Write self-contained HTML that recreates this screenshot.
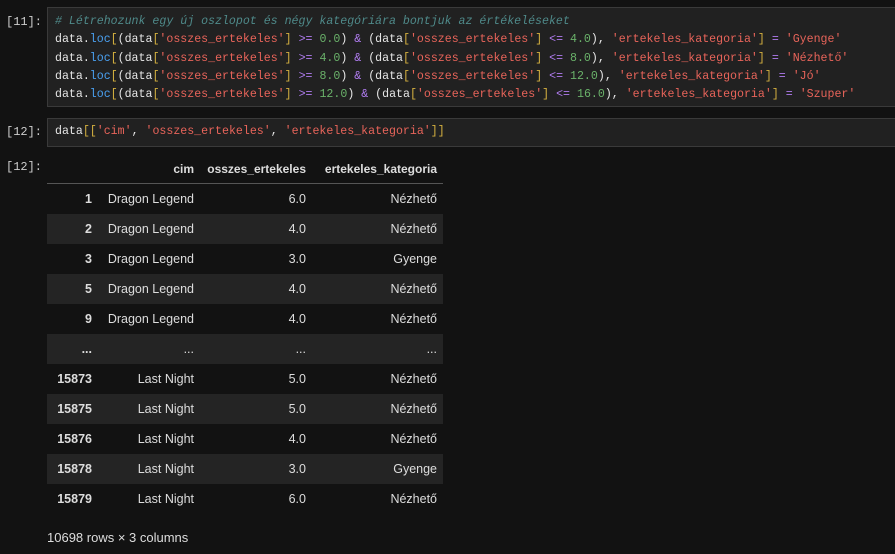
<!DOCTYPE html>
<html><head><meta charset="utf-8"><style>
body{margin:0;width:895px;height:554px;background:#121212;overflow:hidden;position:relative;font-family:"Liberation Sans",sans-serif;}
.p{position:absolute;left:6px;font-family:"Liberation Mono",monospace;font-size:12px;color:#ccc;}
.cell{position:absolute;left:47px;width:860px;background:#212121;border:1px solid #3a3a3a;box-sizing:border-box;}
pre{margin:0;font-family:"Liberation Mono",monospace;font-size:11.6px;line-height:18.3px;color:#e6e6e6;position:absolute;left:7px;white-space:pre;}
.c{color:#4f8a8a;font-style:italic}.s{color:#e8645a}.n{color:#6ab26a}.o{color:#b07cf0}.f{color:#4aa0f0}.b{color:#d4b040}
table{position:absolute;left:47px;top:155px;border-collapse:collapse;font-size:12.5px;color:#ddd;table-layout:fixed;width:396px;}
td,th{height:30px;padding:0 6px 0 0;text-align:right;white-space:nowrap;overflow:hidden;}
th{height:28px;font-weight:bold;font-size:12px;border-bottom:1px solid #555;}
tr:nth-child(odd) td{background:#242424}
td:first-child{font-weight:bold;padding-right:7px}
</style></head><body>
<div class="p" style="top:15px">[11]:</div>
<div class="cell" style="top:7px;height:100px"><pre style="top:5px"><span class="c"># Létrehozunk egy új oszlopot és négy kategóriára bontjuk az értékeléseket</span>
data.<span class="f">loc</span><span class="b">[</span>(data<span class="b">[</span><span class="s">'osszes_ertekeles'</span><span class="b">]</span> <span class="o">&gt;=</span> <span class="n">0.0</span>) <span class="o">&amp;</span> (data<span class="b">[</span><span class="s">'osszes_ertekeles'</span><span class="b">]</span> <span class="o">&lt;=</span> <span class="n">4.0</span>), <span class="s">'ertekeles_kategoria'</span><span class="b">]</span> <span class="o">=</span> <span class="s">'Gyenge'</span>
data.<span class="f">loc</span><span class="b">[</span>(data<span class="b">[</span><span class="s">'osszes_ertekeles'</span><span class="b">]</span> <span class="o">&gt;=</span> <span class="n">4.0</span>) <span class="o">&amp;</span> (data<span class="b">[</span><span class="s">'osszes_ertekeles'</span><span class="b">]</span> <span class="o">&lt;=</span> <span class="n">8.0</span>), <span class="s">'ertekeles_kategoria'</span><span class="b">]</span> <span class="o">=</span> <span class="s">'Nézhető'</span>
data.<span class="f">loc</span><span class="b">[</span>(data<span class="b">[</span><span class="s">'osszes_ertekeles'</span><span class="b">]</span> <span class="o">&gt;=</span> <span class="n">8.0</span>) <span class="o">&amp;</span> (data<span class="b">[</span><span class="s">'osszes_ertekeles'</span><span class="b">]</span> <span class="o">&lt;=</span> <span class="n">12.0</span>), <span class="s">'ertekeles_kategoria'</span><span class="b">]</span> <span class="o">=</span> <span class="s">'Jó'</span>
data.<span class="f">loc</span><span class="b">[</span>(data<span class="b">[</span><span class="s">'osszes_ertekeles'</span><span class="b">]</span> <span class="o">&gt;=</span> <span class="n">12.0</span>) <span class="o">&amp;</span> (data<span class="b">[</span><span class="s">'osszes_ertekeles'</span><span class="b">]</span> <span class="o">&lt;=</span> <span class="n">16.0</span>), <span class="s">'ertekeles_kategoria'</span><span class="b">]</span> <span class="o">=</span> <span class="s">'Szuper'</span></pre></div>
<div class="p" style="top:125px">[12]:</div>
<div class="cell" style="top:118px;height:29px"><pre style="top:4px">data<span class="b">[[</span><span class="s">'cim'</span>, <span class="s">'osszes_ertekeles'</span>, <span class="s">'ertekeles_kategoria'</span><span class="b">]]</span></pre></div>
<div class="p" style="top:160px">[12]:</div>
<table>
<colgroup><col style="width:52px"><col style="width:101px"><col style="width:112px"><col style="width:131px"></colgroup>
<tr><th></th><th>cim</th><th>osszes_ertekeles</th><th>ertekeles_kategoria</th></tr>
<tr><td>1</td><td>Dragon Legend</td><td>6.0</td><td>Nézhető</td></tr>
<tr><td>2</td><td>Dragon Legend</td><td>4.0</td><td>Nézhető</td></tr>
<tr><td>3</td><td>Dragon Legend</td><td>3.0</td><td>Gyenge</td></tr>
<tr><td>5</td><td>Dragon Legend</td><td>4.0</td><td>Nézhető</td></tr>
<tr><td>9</td><td>Dragon Legend</td><td>4.0</td><td>Nézhető</td></tr>
<tr><td>...</td><td>...</td><td>...</td><td>...</td></tr>
<tr><td>15873</td><td>Last Night</td><td>5.0</td><td>Nézhető</td></tr>
<tr><td>15875</td><td>Last Night</td><td>5.0</td><td>Nézhető</td></tr>
<tr><td>15876</td><td>Last Night</td><td>4.0</td><td>Nézhető</td></tr>
<tr><td>15878</td><td>Last Night</td><td>3.0</td><td>Gyenge</td></tr>
<tr><td>15879</td><td>Last Night</td><td>6.0</td><td>Nézhető</td></tr>
</table>
<div style="position:absolute;left:47px;top:530px;font-size:13px;color:#ddd">10698 rows × 3 columns</div>
</body></html>
